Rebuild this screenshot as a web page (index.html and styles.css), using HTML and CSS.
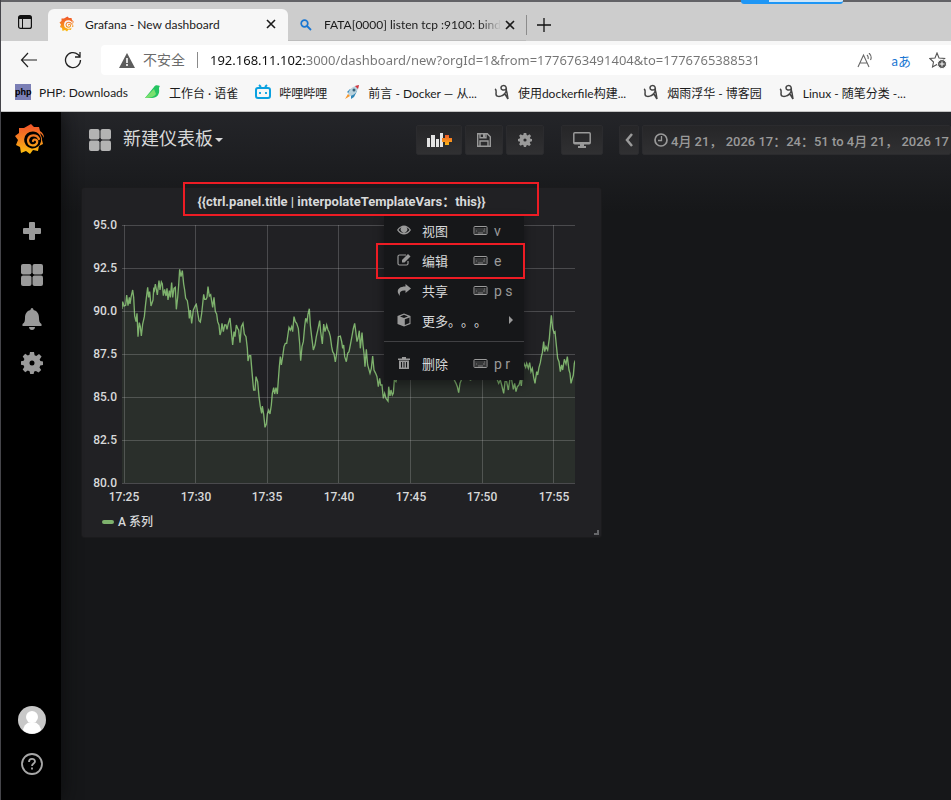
FILE: index.html
```html
<!DOCTYPE html>
<html lang="zh-CN">
<head>
    <meta charset="UTF-8">
    <meta name="viewport" content="width=device-width, initial-scale=1.0">
    <title>Grafana - New dashboard</title>
    <link rel="stylesheet" href="styles.css">
</head>
<body>
    <!-- shared icons -->
    <svg class="defs" width="0" height="0" aria-hidden="true">
        <defs>
            <linearGradient id="flame" gradientUnits="userSpaceOnUse" x1="0" y1="0" x2="0" y2="32">
                <stop offset="0" stop-color="#f0502b"/>
                <stop offset="0.5" stop-color="#f58220"/>
                <stop offset="1" stop-color="#fcc40c"/>
            </linearGradient>
            <symbol id="grafana" viewBox="0 0 30 32">
                <path fill="url(#flame)" fill-rule="evenodd" d="M16 1l3 3 5 0 1 4c3 2 4 4 4 7-1-2-2-4-4-5 1 3 2 4 2 7l1 4-4 2-1 5-5-1-3 4-4-3-5 2-1-6-4-2 2-5-3-4 4-3 0-5 5 0zM18 8.500a8.500 8.500 0 1 0 8 10C27 13 23 8.500 18 8.500z"/>
                <path fill="none" stroke="url(#flame)" stroke-width="2.200" stroke-linecap="round" d="M24 16C22 11 14 11 13 17c0 6 7 7 9 3 1-3-3-5-4-2"/>
            </symbol>
            <symbol id="tiles" viewBox="0 0 22 22">
                <rect width="10.500" height="10.500" rx="2"/><rect x="11.500" width="10.500" height="10.500" rx="2"/>
                <rect y="11.500" width="10.500" height="10.500" rx="2"/><rect x="11.500" y="11.500" width="10.500" height="10.500" rx="2"/>
            </symbol>
            <symbol id="gear" viewBox="0 0 22 22">
                <path fill-rule="evenodd" d="M9 0h4l.6 3.300 1.700.7L18 2l2.600 2.600-2 2.800.8 1.700L22 9.500v3.500l-2.800.6-.7 1.800 1.700 2.600-2.600 2.600-2.700-1.700-1.700.7L12.600 22H9.200l-.6-2.800-1.800-.7L4.200 20.200 1.700 17.600l1.600-2.500-.7-1.800L0 12.800V9.300l2.700-.6.7-1.800L1.700 4.400 4.200 1.800 6.800 3.500l1.700-.7zM11 8.500a2.500 2.500 0 1 0 0 5 2.500 2.500 0 0 0 0-5z"/>
            </symbol>
            <symbol id="keyboard" viewBox="0 0 14 10">
                <rect x=".5" y=".5" width="13" height="8" rx=".8" fill="none" stroke="currentColor"/>
                <path stroke="currentColor" d="M2 3h1m1 0h1m1 0h1m1 0h1m1 0h2M2 5h2m1 0h1m1 0h1m1 0h3M2 7h1m1 0h6m1 0h1"/>
            </symbol>
            <symbol id="close" viewBox="0 0 10 10">
                <path d="M1 1l8 8M9 1L1 9" stroke="currentColor" stroke-width="1.600"/>
            </symbol>
            <symbol id="cnblogs" viewBox="0 0 16 16">
                <path fill="none" stroke="#444" stroke-width="1.500" d="M1 5c2 1 1 3 1 5 0 3 4 3 7 1 3-2 4-5 3-8-1-2-5-2-5 1 0 2 3 3 5 1l1 4 1 6M8 12l3-2 3 5"/>
            </symbol>
        </defs>
    </svg>

    <header class="browser">
        <div class="tabs">
            <button class="tab-menu" aria-label="Tab actions">
                <svg width="14" height="14" viewBox="0 0 14 14"><rect x=".6" y=".6" width="12.800" height="12.800" rx="2" fill="none" stroke="#111" stroke-width="1.200"/><path d="M1 1h12v3H1z" fill="#111"/><path d="M4.500 4v9" stroke="#111"/></svg>
            </button>
            <div class="tab active">
                <svg width="16" height="16"><use href="#grafana"/></svg>
                <span class="tab-title">Grafana - New dashboard</span>
                <button aria-label="Close tab"><svg width="10" height="10"><use href="#close"/></svg></button>
            </div>
            <div class="tab">
                <svg width="12" height="12" viewBox="0 0 12 12"><circle cx="4.500" cy="4.500" r="3.300" fill="none" stroke="#1976d2" stroke-width="1.700"/><path d="M7 7l4 4" stroke="#1976d2" stroke-width="1.800"/></svg>
                <span class="tab-title fade">FATA[0000] listen tcp :9100: bind</span>
                <button aria-label="Close tab"><svg width="10" height="10"><use href="#close"/></svg></button>
            </div>
            <button class="new-tab" aria-label="New tab"><svg width="14" height="14" viewBox="0 0 14 14"><path d="M7 0v14M0 7h14" stroke="#111" stroke-width="1.300"/></svg></button>
            <div class="strip"></div>
        </div>

        <div class="toolbar">
            <button class="back" aria-label="Back"><svg width="18" height="16" viewBox="0 0 18 16"><path d="M17 8H1.500M8 1L1.500 8 8 15" fill="none" stroke="#222" stroke-width="1.200"/></svg></button>
            <button class="reload" aria-label="Reload"><svg width="18" height="18" viewBox="0 0 18 18"><path d="M16.500 9A7.500 7.500 0 1 1 14 3.500L16 5.500M16 1v5h-5" fill="none" stroke="#222" stroke-width="1.300"/></svg></button>
            <div class="address">
                <svg width="16" height="15" viewBox="0 0 16 15"><path d="M8 0l8 15H0z" fill="#5c5c5c"/><path d="M8 5v5m0 1v2" stroke="#fff" stroke-width="1.600"/></svg>
                <label for="url">不安全</label>
                <input id="url" type="text" value="192.168.11.102:3000/dashboard/new?orgId=1&amp;from=1776763491404&amp;to=1776765388531">
                <button class="read" aria-label="Read aloud"><svg width="16" height="15" viewBox="0 0 16 15"><path d="M1 14L6.500 2 12 14M3 10h7M10 2c1 1 1.500 2.500 1 4M12 0c2 2 2.500 5 1.500 7" fill="none" stroke="#666" stroke-width="1.100"/></svg></button>
                <button class="translate" aria-label="Translate">aあ</button>
                <button class="fav" aria-label="Add favorite"><svg width="18" height="17" viewBox="0 0 18 17"><path d="M8 1l2 5 5.500.5-4 3.500 1 5L8 12.500 3.500 15l1-5L.8 6.500 6 6z" fill="#fff" stroke="#555" stroke-width="1.100"/><circle cx="13" cy="12" r="4.500" fill="#555" stroke="#fff"/><path d="M13 9.500v5M10.500 12h5" stroke="#fff"/></svg></button>
            </div>
        </div>

        <nav class="bookmarks">
            <a href="#"><span class="php">php</span>PHP: Downloads</a>
            <a href="#"><svg width="16" height="16" viewBox="0 0 16 16"><path d="M9 3c1-2 3-2 6-1-1 1-1 2-1 3 1 5-2 9-7 9H0z" fill="#25c462"/><path d="M9 5l-9 9c5 0 9-1 11-4z" fill="#7be06f"/></svg>工作台 · 语雀</a>
            <a href="#"><svg width="16" height="16" viewBox="0 0 16 16"><rect x="1" y="4" width="14" height="10" rx="2" fill="none" stroke="#0aa1e0" stroke-width="2"/><path d="M4 1l2 2M12 1l-2 2M5 8v2M11 8v2" stroke="#0aa1e0" stroke-width="1.800"/></svg>哔哩哔哩</a>
            <a href="#"><svg width="16" height="16" viewBox="0 0 16 16"><path d="M3 8l3-3h4l3 2-3 6-3 2 0-4z" fill="#2e86b8"/><path d="M4 10c1-5 5-8 11-9-1 6-4 10-9 11z" fill="#b9d2dd"/><path d="M11 2l4-1-1 4z" fill="#d8343c"/><circle cx="10" cy="6" r="1.500" fill="#35617a"/><path d="M4 10l2 2-5 3z" fill="#f5962c"/></svg>前言 - Docker — 从...</a>
            <a href="#"><svg width="16" height="16"><use href="#cnblogs"/></svg>使用dockerfile构建...</a>
            <a href="#"><svg width="16" height="16"><use href="#cnblogs"/></svg>烟雨浮华 - 博客园</a>
            <a href="#"><svg width="16" height="16"><use href="#cnblogs"/></svg>Linux - 随笔分类 -...</a>
        </nav>
    </header>

    <div class="app">
        <aside class="sidemenu">
            <a href="#" class="logo" aria-label="Home"><svg width="30" height="32"><use href="#grafana"/></svg></a>
            <a href="#" aria-label="Create"><svg width="18" height="18" viewBox="0 0 18 18"><path d="M7 0h4q1 0 1 1v5h5q1 0 1 1v4q0 1-1 1h-5v5q0 1-1 1H7q-1 0-1-1v-5H1q-1 0-1-1V7q0-1 1-1h5V1q0-1 1-1z"/></svg></a>
            <a href="#" aria-label="Dashboards"><svg width="22" height="22"><use href="#tiles"/></svg></a>
            <a href="#" aria-label="Alerting"><svg width="20" height="22" viewBox="0 0 20 22"><path d="M10 0c1 0 1.500 1 1.500 2 4 1 5.500 4 5.500 8 0 3 .5 5 2.500 6v2H.5v-2C2.500 15 3 13 3 10c0-4 1.500-7 5.500-8 0-1 .5-2 1.500-2zM7 19h6c0 4-6 4-6 0z"/></svg></a>
            <a href="#" aria-label="Configuration"><svg width="22" height="22"><use href="#gear"/></svg></a>
            <div class="spacer"></div>
            <a href="#" aria-label="Profile"><svg width="28" height="28" viewBox="0 0 28 28"><circle cx="14" cy="14" r="14" fill="#c8c8c8"/><circle cx="14" cy="11" r="6" fill="#fff"/><path d="M5 24c1-5 4-8 9-8s8 3 9 8c-5 5-13 5-18 0z" fill="#fff"/></svg></a>
            <a href="#" aria-label="Help"><svg width="22" height="22" viewBox="0 0 22 22"><g fill="none" stroke="#a8a8a8" stroke-width="1.800"><circle cx="11" cy="11" r="10"/><path d="M8 9c0-4 6-4 6-.5 0 2-3 2-3 4.500M11 14.500v2"/></g></svg></a>
        </aside>

        <main class="dashboard">
            <div class="navbar">
                <button class="title"><svg width="22" height="22"><use href="#tiles"/></svg><span>新建仪表板</span><i class="caret"></i></button>
                <div class="actions">
                    <button class="btn wide" aria-label="Add panel"><svg width="25" height="14" viewBox="0 0 25 14"><defs><linearGradient id="plus" x1="0" y1="0" x2="0" y2="1"><stop offset="0" stop-color="#ef5a28"/><stop offset="1" stop-color="#fbb616"/></linearGradient></defs><path fill="#e3e3e3" d="M0 5h3v9H0zM4 2h4v12H4zM9 6h3v8H9zM13 0h3v14h-3z"/><path fill="url(#plus)" d="M18 2h4v3h3v4h-3v3h-4V9h-3V5h3z"/></svg></button>
                    <button class="btn" aria-label="Save"><svg width="14" height="14" viewBox="0 0 14 14"><path d="M.7.700h9.600l3 3v9.600H.7zM3 .700v4h6v-4M3 13V8h8v5" fill="none" stroke="currentColor" stroke-width="1.400"/><path d="M6 1h2v3H6z"/></svg></button>
                    <button class="btn" aria-label="Settings"><svg width="14" height="14"><use href="#gear"/></svg></button>
                    <button class="btn tv" aria-label="Cycle view"><svg width="18" height="16" viewBox="0 0 18 16"><rect x=".8" y=".8" width="16.400" height="11" rx="1" fill="none" stroke="currentColor" stroke-width="1.500"/><path d="M1 10h16v2H1zM7 12h4v2h2v2H5v-2h2z"/></svg></button>
                    <button class="btn narrow" aria-label="Back in time"><svg width="8" height="14" viewBox="0 0 8 14"><path d="M7 1L2 7l5 6" fill="none" stroke="currentColor" stroke-width="2.500"/></svg></button>
                    <button class="btn time"><svg width="14" height="14" viewBox="0 0 14 14"><circle cx="7" cy="7" r="6" fill="none" stroke="currentColor" stroke-width="1.700"/><path d="M7.500 3v4.500H4" fill="none" stroke="currentColor" stroke-width="1.300"/></svg>4月 21， 2026 17：24：51 to 4月 21， 2026 17</button>
                </div>
            </div>

            <section class="panel">
                <h2 class="panel-title">{{ctrl.panel.title | interpolateTemplateVars：this}}</h2>
                <svg class="chart" viewBox="0 0 519 295">
                    <!-- plot area starts at 40,7 and is 453 x 258 -->
                    <svg x="40" y="7" width="453" height="258" viewBox="126 45 1359 774">
                        <path class="series" d="M100 295 126 295 128 275 132 288 137 286 140 255 144 287 148 262 150 282 153 262 158 240 161 262 164 318 168 335 171 310 174 380 178 338 181 350 184 378 188 342 193 320 197 280 203 232 206 262 209 245 213 288 219 270 221 238 223 242 226 222 229 238 232 255 237 212 240 240 244 216 247 222 250 257 254 238 258 258 261 235 264 270 268 242 271 262 275 218 278 262 282 235 286 232 289 298 293 262 296 225 299 178 303 200 307 182 311 222 314 240 317 265 322 272 326 300 328 325 331 300 335 340 340 300 343 293 346 287 349 283 353 308 357 332 361 336 365 310 368 282 371 253 374 268 378 268 381 262 384 230 388 258 392 254 398 292 402 262 406 305 410 312 413 335 417 345 420 375 423 365 426 340 430 365 434 345 438 345 441 358 445 340 450 324 454 365 458 405 462 365 465 380 469 345 473 355 476 360 480 398 484 350 489 340 493 372 498 380 502 415 504 453 508 437 512 437 516 485 519 520 521 540 525 540 528 500 533 515 537 560 541 590 545 610 547 588 551 612 555 652 559 642 562 612 566 600 570 612 574 585 577 550 581 533 584 552 588 533 592 552 595 510 598 470 601 440 604 465 608 440 612 410 616 400 620 400 624 372 627 352 631 360 635 350 638 365 642 320 646 335 650 340 655 355 659 400 662 452 666 410 670 395 674 350 677 325 681 335 684 312 688 296 691 345 695 380 700 420 705 405 709 380 713 362 719 332 722 365 727 402 731 342 735 365 740 345 744 360 747 365 751 380 755 410 758 425 762 432 766 456 770 430 775 380 781 378 785 395 788 415 791 405 794 440 799 455 803 430 807 425 811 405 816 378 820 355 824 340 827 362 831 395 834 385 838 362 841 415 846 368 849 405 852 430 855 470 859 418 863 465 870 490 874 475 878 438 882 480 887 490 891 500 895 530 899 505 902 525 906 525 910 565 914 550 918 565 924 573 926 530 930 558 933 540 937 555 940 550 943 510 948 515 952 500 965 475 980 455 992 470 1005 440 1030 465 1050 430 1070 460 1095 450 1115 480 1123 510 1128 520 1132 530 1136 548 1140 520 1144 510 1150 495 1168 508 1172 510 1180 480 1200 460 1220 475 1250 505 1256 520 1261 510 1265 525 1271 550 1275 515 1280 515 1285 540 1290 505 1295 510 1300 538 1304 520 1308 545 1312 530 1317 525 1321 510 1324 528 1328 485 1332 460 1337 472 1340 460 1345 475 1349 458 1353 485 1357 475 1361 502 1365 520 1370 485 1373 495 1377 472 1381 458 1384 440 1387 428 1391 395 1394 425 1398 410 1403 420 1408 385 1410 360 1414 316 1418 355 1422 368 1425 365 1429 405 1433 445 1437 455 1441 485 1445 465 1448 480 1453 448 1458 462 1462 440 1467 480 1470 490 1473 520 1477 505 1480 495 1483 460 1485 453 1510 450V850H100z"/>
                    </svg>
                    <g class="grid">
                        <path d="M40 7.500h453M40 50.500h453M40 93.500h453M40 136.500h453M40 179.500h453M40 222.500h453M40 265.500h453"/>
                        <path d="M42.500 7v258M113.500 7v258M185.500 7v258M256.500 7v258M328.500 7v258M400.500 7v258M471.500 7v258"/>
                    </g>
                    <g class="ticks" text-anchor="end">
                        <text x="35" y="11">95.0</text>
                        <text x="35" y="54">92.5</text>
                        <text x="35" y="97">90.0</text>
                        <text x="35" y="140">87.5</text>
                        <text x="35" y="183">85.0</text>
                        <text x="35" y="226">82.5</text>
                        <text x="35" y="269">80.0</text>
                    </g>
                    <g class="ticks" text-anchor="middle">
                        <text x="42" y="283">17:25</text>
                        <text x="114" y="283">17:30</text>
                        <text x="185" y="283">17:35</text>
                        <text x="257" y="283">17:40</text>
                        <text x="329" y="283">17:45</text>
                        <text x="400" y="283">17:50</text>
                        <text x="472" y="283">17:55</text>
                    </g>
                </svg>
                <div class="legend"><i></i>A 系列</div>
                <span class="resize"></span>

                <div class="menu">
                    <a href="#"><svg width="14" height="14" viewBox="0 0 14 14"><path fill-rule="evenodd" d="M0 7c4-6 10-6 14 0-4 6-10 6-14 0zm1.500 0c3 4 8 4 11 0-1-1.500-2-2.300-3-2.700a3.300 3.300 0 1 1-5 0c-1 .4-2 1.200-3 2.700z"/></svg><span>视图</span><kbd><svg width="15" height="10"><use href="#keyboard"/></svg>v</kbd></a>
                    <a href="#"><svg width="14" height="14" viewBox="0 0 14 14"><path d="M9 2H2.500Q1 2 1 3.500v7Q1 12 2.500 12h7q1.500 0 1.500-1.500V8" fill="none" stroke="currentColor" stroke-width="1.200"/><path d="M5 7l6-6 2.500 2.500-6 6H5z"/></svg><span>编辑</span><kbd><svg width="15" height="10"><use href="#keyboard"/></svg>e</kbd></a>
                    <a href="#"><svg width="14" height="14" viewBox="0 0 14 14"><path d="M8.500 1L14 5.500 8.500 10V7.500C4 7 2 9 3 13-1 9 0 3.500 8.500 3.500z"/></svg><span>共享</span><kbd><svg width="15" height="10"><use href="#keyboard"/></svg>p s</kbd></a>
                    <a href="#"><svg width="14" height="14" viewBox="0 0 14 14"><path fill-rule="evenodd" d="M7 .500L13.500 3v8L7 13.500.500 11V3zM7 1.800L3 3.400l4 1.700 4-1.700zM7.800 6.300v5.600l4.700-2V4.500z"/></svg><span>更多。。。</span><i class="arrow"></i></a>
                    <hr>
                    <a href="#"><svg width="14" height="14" viewBox="0 0 14 14"><path d="M1 2.500h4V1h4v1.500h4V4H1z"/><path fill-rule="evenodd" d="M2 4.500h10V13H2zM4 6v5.500h1V6zm2.500 0v5.500h1V6zM9 6v5.500h1V6z"/></svg><span>删除</span><kbd><svg width="15" height="10"><use href="#keyboard"/></svg>p r</kbd></a>
                </div>
                <div class="mark mark-title"></div>
                <div class="mark mark-edit"></div>
            </section>
        </main>
    </div>
</body>
</html>
```

FILE: styles.css
```css
* {
    box-sizing: border-box;
}

body {
    margin: 0;
    min-height: 100vh;
    display: flex;
    flex-direction: column;
    overflow: hidden;
    background-color: #161719;
    border-left: 1px solid #45454a;
    font-family: Roboto, "Noto Sans CJK SC", sans-serif;
    font-size: 13px;
}

button {
    border: none;
    padding: 0;
    background: none;
    font: inherit;
    color: inherit;
    display: flex;
    align-items: center;
    justify-content: center;
}

a {
    color: inherit;
    text-decoration: none;
}

svg {
    fill: currentColor;
    flex-shrink: 0;
}

.defs {
    position: absolute;
}

/* browser chrome */
.browser {
    position: relative;
    z-index: 2;
    background-color: #f7f7f7;
    color: #1b1b1b;
    font-family: Lato, "Noto Sans CJK SC", sans-serif;
    font-size: 12px;
    border-top: 2px solid #626266;
    border-bottom: 1px solid #c4c4c4;
}

.tabs {
    display: flex;
    height: 39px;
    background-color: #cdcdcd;
    position: relative;
}

/* download strip peeking in from the window above */
.strip {
    position: absolute;
    top: -2px;
    left: 740px;
    width: 102px;
    height: 4px;
    background: linear-gradient(to right, #1e96f5 28px, #cde6fa 28px);
    border-bottom: 2px solid #1e96f5;
    border-radius: 0 0 3px 3px;
}

.tab-menu {
    width: 47px;
}

.tab {
    display: flex;
    align-items: center;
    width: 238px;
    padding: 7px 11px 0 12px;
    gap: 12px;
    border-bottom: 1px solid #bdbdbd;
}

.tab.active {
    width: 240px;
    margin-top: 7px;
    gap: 10px;
    padding: 0 12px 2px 11px;
    background-color: #f7f7f7;
    border: none;
    border-radius: 6px 6px 0 0;
}

.tab-title {
    flex: 1;
    min-width: 0;
    overflow: hidden;
    white-space: nowrap;
}

.fade {
    margin-right: -8px;
    mask-image: linear-gradient(to right, #000 88%, transparent);
}

.new-tab {
    width: 35px;
    height: 20px;
    margin-top: 13px;
    border-left: 1px solid #8c8c8c;
}

.toolbar {
    display: flex;
    align-items: center;
    padding: 4px 0 0;
}

.back {
    width: 18px;
    margin-left: 19px;
}

.reload {
    width: 18px;
    margin: 0 19px 0 26px;
}

.address {
    flex: 1;
    min-width: 0;
    height: 30px;
    display: flex;
    align-items: center;
    padding: 0 4px 0 18px;
    background-color: #fff;
    border-radius: 4px 0 0 4px;
    font-size: 14px;
    color: #6b6b6b;
    white-space: nowrap;
}

.address label {
    margin-left: 8px;
    padding-right: 12px;
    border-right: 1px solid #8a8a8a;
    line-height: 16px;
}

.address input {
    flex: 1;
    min-width: 0;
    height: 28px;
    margin-left: 12px;
    padding: 0;
    border: none;
    outline: none;
    font: 13px "Noto Sans", sans-serif;
    color: transparent;
    /* host part dark, the rest grey */
    background: linear-gradient(to right, #111 95px, #747474 95px);
    background-clip: text;
}

.address .translate {
    color: #1976d2;
    margin: 0 18px 0 19px;
    font-size: 13px;
}

.bookmarks {
    display: flex;
    height: 36px;
    align-items: center;
    gap: 17px;
    padding: 0 0 2px 14px;
    white-space: nowrap;
}

.bookmarks a {
    display: flex;
    align-items: center;
    gap: 8px;
}

.php {
    width: 16px;
    height: 16px;
    background-color: #7b7fb5;
    color: #000;
    font: bold 9px/16px "Liberation Sans", sans-serif;
    text-align: center;
}

/* grafana */
.app {
    flex: 1;
    display: flex;
}

.sidemenu {
    width: 60px;
    flex-shrink: 0;
    display: flex;
    flex-direction: column;
    align-items: center;
    padding: 0 0 14px 2px;
    background-color: #000;
    color: #9a9a9a;
    box-shadow: 0 0 20px #0b0c0d;
    z-index: 1;
}

.sidemenu a {
    display: flex;
    align-items: center;
    justify-content: center;
    width: 58px;
    height: 44px;
}

.sidemenu .logo {
    height: 54px;
    margin-bottom: 43px;
    padding-right: 4px;
}

.spacer {
    flex: 1;
}

.dashboard {
    flex: 1;
    min-width: 0;
    background: linear-gradient(#242529, #161719 100px);
}

.navbar {
    display: flex;
    align-items: center;
    height: 56px;
    padding-left: 28px;
    overflow: hidden;
}

.title {
    color: #d8d9da;
    font-size: 18px;
    line-height: 24px;
    white-space: nowrap;
}

.title svg {
    color: #b3b3b3;
}

.title span {
    margin-left: 12px;
    padding-bottom: 3px;
}

.caret {
    margin-left: 2px;
    border: 4px solid transparent;
    border-top-color: #d8d9da;
    border-bottom: none;
}

.actions {
    display: flex;
    flex: 1;
    gap: 3px;
    margin-left: 193px;
}

.btn {
    flex-shrink: 0;
    width: 38px;
    height: 30px;
    background: linear-gradient(#262628, #303032);
    border: 1px solid #2b2b2e;
    border-radius: 2px;
    color: #9a9a9a;
    white-space: nowrap;
}

.wide {
    width: 46px;
}

.tv {
    width: 42px;
    margin: 0 13px 0 14px;
}

.narrow {
    width: 20px;
}

.time {
    flex: 1 0 auto;
    justify-content: flex-start;
    padding-left: 11px;
    gap: 3px;
    font-weight: 500;
}

.panel {
    position: relative;
    max-width: 521px;
    margin: 19px 0 0 20px;
    padding-bottom: 6px;
    background-color: #212124;
    border: 1px solid #1b1b1d;
    border-radius: 3px;
}

.panel-title {
    margin: 0;
    font-size: 13px;
    font-weight: 700;
    line-height: 27px;
    height: 30px;
    text-align: center;
    color: #d8d9da;
}

.chart {
    display: block;
    width: 100%;
}

.series {
    fill: #7eb26d1a;
    stroke: #7eb26d;
    stroke-width: 4;
}

.grid path {
    fill: none;
    stroke: #c8c8c8;
    stroke-opacity: 0.25;
}

.ticks text {
    fill: #d8d9da;
    font-size: 12px;
    font-weight: 500;
}

.legend {
    display: flex;
    align-items: center;
    gap: 4px;
    padding-left: 20px;
    font-size: 12px;
    font-weight: 500;
    line-height: 18px;
    color: #d8d9da;
}

.legend i {
    width: 12px;
    height: 4px;
    border-radius: 2px;
    background-color: #7eb26d;
}

.resize {
    position: absolute;
    right: 2px;
    bottom: 2px;
    width: 5px;
    height: 5px;
    border-right: 2px solid #66676a;
    border-bottom: 2px solid #66676a;
}

.menu {
    position: absolute;
    top: 27px;
    left: 302px;
    width: 140px;
    padding-bottom: 2px;
    background-color: #161719;
    color: #9a9a9a;
    box-shadow: 0 5px 10px rgba(0, 0, 0, 0.4);
}

.menu a {
    display: flex;
    align-items: center;
    height: 30px;
    padding-left: 13px;
}

.menu span {
    width: 51px;
    margin-left: 11px;
    color: #d8d9da;
    font-size: 13px;
    white-space: nowrap;
    text-spacing-trim: space-all;
}

.menu kbd {
    display: flex;
    align-items: center;
    gap: 6px;
    padding-top: 2px;
    font: 14px Roboto, sans-serif;
}

.menu hr {
    margin: 6px 0;
    border: none;
    border-top: 1px solid #404043;
}

.arrow {
    margin-left: 36px;
    border: 4px solid transparent;
    border-left-color: #9a9a9a;
    border-right: none;
}

.mark {
    position: absolute;
    border: 2px solid #ed1c24;
}

.mark-title {
    top: -6px;
    left: 101px;
    width: 356px;
    height: 34px;
}

.mark-edit {
    top: 55px;
    left: 294px;
    width: 149px;
    height: 36px;
}
```
